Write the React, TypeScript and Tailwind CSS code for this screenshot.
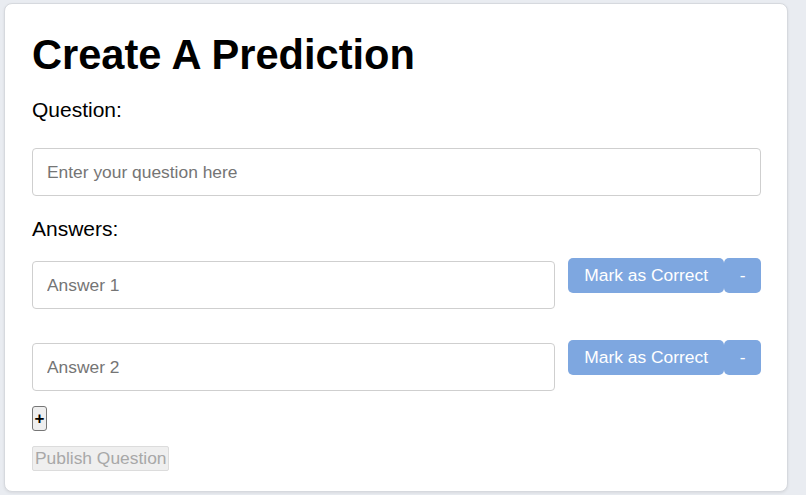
import React from "react";

export default function App() {
  const answers = ["Answer 1", "Answer 2"];
  return (
    <div
      className="min-h-[495px] w-[806px] bg-[#e9ecf1] pt-[3px] pl-[4px]"
      style={{ fontFamily: '"Liberation Sans", Arial, Helvetica, sans-serif' }}
    >
      <div className="flex h-[489px] w-[784px] flex-col rounded-[8px] border border-[#d6d9de] bg-white pt-[27px] pl-[27px] pr-[26px] shadow-[0_1px_3px_rgba(0,0,0,0.08)]">
        <h1 className="text-[41.6px] font-bold leading-[48px] text-black">Create A Prediction</h1>
        <label className="mt-[19px] text-[21px] leading-[24px] text-black">Question:</label>
        <input
          className="mt-[26px] h-[48px] w-[729px] rounded-[4px] border border-[#cfcfcf] px-[14px] text-[17.4px] text-black outline-none placeholder:text-[#757575]"
          placeholder="Enter your question here"
        />
        <label className="mt-[21px] text-[21px] leading-[24px] text-black">Answers:</label>
        <div className="mt-[17px] flex flex-col gap-[31px]">
          {answers.map((a) => (
            <div key={a} className="flex items-start">
              <input
                className="mt-[3px] h-[48px] w-[524px] rounded-[4px] border border-[#cfcfcf] px-[14px] text-[17.4px] text-black outline-none placeholder:text-[#757575]"
                placeholder={a}
              />
              <button className="ml-[13px] h-[35px] w-[156px] rounded-[5px] bg-[#7ea7e0] text-[17.4px] text-white">
                Mark as Correct
              </button>
              <button className="h-[35px] w-[37px] rounded-[5px] bg-[#7ea7e0] text-[17.4px] text-white">-</button>
            </div>
          ))}
        </div>
        <div className="mt-[15px]">
          <button className="h-[25px] w-[15px] rounded-[3px] border border-[#767676] bg-[#efefef] p-0 text-[17px] font-bold leading-[20px] text-black">
            +
          </button>
        </div>
        <div className="mt-[15px]">
          <button
            disabled
            className="h-[25px] rounded-[2px] border border-[#dcdcdc] bg-[#efefef] px-[2px] text-[17.4px] leading-[21px] text-[#a8a8a8]"
          >
            Publish Question
          </button>
        </div>
      </div>
    </div>
  );
}
